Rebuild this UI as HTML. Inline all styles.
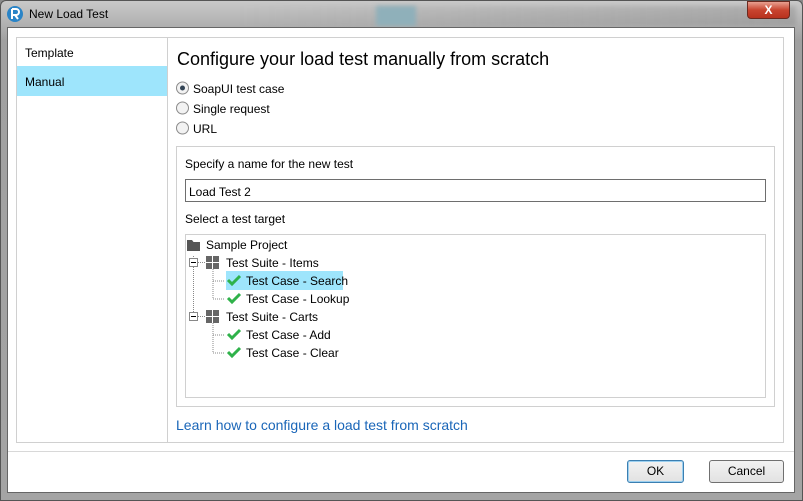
<!DOCTYPE html>
<html><head><style>
*{margin:0;padding:0;box-sizing:border-box}
body{width:803px;height:501px;overflow:hidden;font-family:"Liberation Sans",sans-serif;font-size:12px;color:#000;position:relative;background:#8a8a8a}
.a{position:absolute}
.frame{left:0;top:0;width:803px;height:501px;border:1px solid #555;border-radius:6px 6px 0 0;background:linear-gradient(#c9c9c9,#a0a0a0 40px,#a4a4a4);}
.inner{left:7px;top:27px;width:788px;height:466px;background:#fff;border:1px solid #666}
.t{font-size:12px;top:1px}
</style></head><body>
<div class="a frame"></div>
<div class="a" style="left:236px;top:6px;width:560px;height:20px;background:linear-gradient(90deg,rgba(160,160,160,0),rgba(120,120,120,.3));filter:blur(2px)"></div>
<div class="a" style="left:376px;top:6px;width:40px;height:20px;background:#8fb0ba;filter:blur(2px)"></div>
<svg class="a" style="left:6px;top:5px" width="18" height="18" viewBox="0 0 18 18"><circle cx="9" cy="9" r="8" fill="#2a84c7"/><path d="M6 4v10M6 4h4a3 3 0 0 1 0 6H6M9 10l3 4" stroke="#fff" stroke-width="2" fill="none"/></svg>
<div class="a" style="left:29px;top:7px;font-size:12px">New Load Test</div>
<div class="a" style="left:747px;top:1px;width:43px;height:18px;border:1px solid #6b2a20;border-radius:0 0 4px 4px;background:linear-gradient(#e8a090,#c8442f 50%,#b8321e);color:#fff;font-weight:bold;text-align:center;font-size:12px;line-height:16px">X</div>
<div class="a inner"></div>
<div class="a" style="left:16px;top:37px;width:768px;height:406px;border:1px solid #d0d0d0"></div>
<div class="a" style="left:167px;top:37px;width:1px;height:406px;background:#d0d0d0"></div>
<div class="a" style="left:17px;top:66px;width:150px;height:30px;background:#9ee5fc"></div>
<div class="a" style="left:25px;top:46px">Template</div>
<div class="a" style="left:25px;top:75px">Manual</div>
<div class="a" style="left:177px;top:49px;font-size:18px">Configure your load test manually from scratch</div>
<svg class="a" style="left:176px;top:81px" width="14" height="60"><g fill="#f2f2f2" stroke="#8a8a8a"><circle cx="6.5" cy="7" r="6"/><circle cx="6.5" cy="27" r="6"/><circle cx="6.5" cy="47" r="6"/></g><circle cx="6.5" cy="7" r="2.5" fill="#345"/></svg>
<div class="a" style="left:193px;top:82px">SoapUI test case</div>
<div class="a" style="left:193px;top:102px">Single request</div>
<div class="a" style="left:193px;top:122px">URL</div>
<div class="a" style="left:176px;top:146px;width:599px;height:261px;border:1px solid #d0d0d0"></div>
<div class="a" style="left:185px;top:157px">Specify a name for the new test</div>
<div class="a" style="left:185px;top:179px;width:581px;height:23px;border:1px solid #6e6e6e"></div>
<div class="a" style="left:189px;top:185px">Load Test 2</div>
<div class="a" style="left:185px;top:212px">Select a test target</div>
<div class="a" style="left:185px;top:234px;width:581px;height:164px;border:1px solid #d0d0d0"></div>
<svg class="a" style="left:186px;top:236px" width="60" height="126">
<path d="M1 4h5l1.5 2H14v9H1z" fill="#555"/>
<g stroke="#888" stroke-dasharray="1 1" fill="none"><path d="M7.5 20v2M7.5 31v45M12 26.5h7M27 33v30h12M27 45h12M12 80.5h7M27 87v30h12M27 99h12"/></g>
<g fill="#fff" stroke="#888"><rect x="3.5" y="22.5" width="8" height="8"/><rect x="3.5" y="76.5" width="8" height="8"/></g>
<path d="M5 26.5h5M5 80.5h5" stroke="#000"/>
<g fill="#666"><rect x="20" y="20" width="6" height="6"/><rect x="27" y="20" width="6" height="6"/><rect x="20" y="27" width="6" height="6"/><rect x="27" y="27" width="6" height="6"/><rect x="20" y="74" width="6" height="6"/><rect x="27" y="74" width="6" height="6"/><rect x="20" y="81" width="6" height="6"/><rect x="27" y="81" width="6" height="6"/></g>
</svg>
<div class="a" style="left:226px;top:271px;width:117px;height:19px;background:#9ee5fc"></div>
<svg class="a" style="left:226px;top:272px" width="18" height="90"><g stroke="#2fb24a" stroke-width="3" fill="none"><path d="M2 8l4 4 8-8M2 26l4 4 8-8M2 62l4 4 8-8M2 80l4 4 8-8"/></g></svg>
<div class="a" style="left:206px;top:238px">Sample Project</div>
<div class="a" style="left:226px;top:256px">Test Suite - Items</div>
<div class="a" style="left:246px;top:274px">Test Case - Search</div>
<div class="a" style="left:246px;top:292px">Test Case - Lookup</div>
<div class="a" style="left:226px;top:310px">Test Suite - Carts</div>
<div class="a" style="left:246px;top:328px">Test Case - Add</div>
<div class="a" style="left:246px;top:346px">Test Case - Clear</div>
<div class="a" style="left:176px;top:417px;font-size:14px;color:#1a66b8">Learn how to configure a load test from scratch</div>
<div class="a" style="left:8px;top:451px;width:786px;height:1px;background:#d8d8d8"></div>
<div class="a" style="left:8px;top:452px;width:786px;height:40px;background:#fff"></div>
<div class="a" style="left:627px;top:460px;width:57px;height:23px;border:1px solid #3c7fb1;border-radius:3px;background:linear-gradient(#f2f2f2,#e2e2e2);box-shadow:inset 0 0 0 1px #9cd0f0;text-align:center;line-height:21px">OK</div>
<div class="a" style="left:709px;top:460px;width:75px;height:23px;border:1px solid #707070;border-radius:3px;background:linear-gradient(#f2f2f2,#e2e2e2);text-align:center;line-height:21px">Cancel</div>
</body></html>
